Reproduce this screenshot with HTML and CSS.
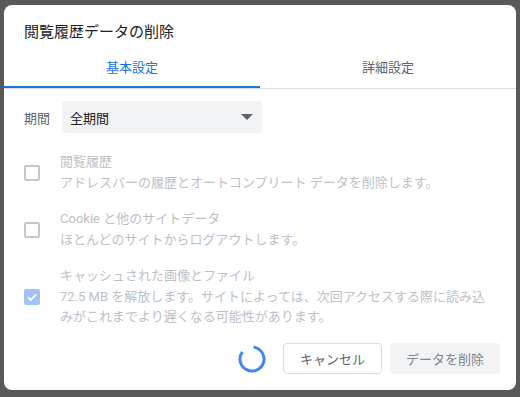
FILE: index.html
```html
<!DOCTYPE html>
<html lang="ja">
<head>
    <meta charset="UTF-8">
    <title>閲覧履歴データの削除</title>
    <link rel="stylesheet" href="styles.css">
</head>
<body>

<div class="dialog">
    <h1 class="dialog-title">閲覧履歴データの削除</h1>

    <!-- Tabs -->
    <div class="tabs">
        <div class="tab active">基本設定</div>
        <div class="tab">詳細設定</div>
    </div>

    <div class="range-row">
        <span class="range-label">期間</span>
        <div class="select">
            <span>全期間</span>
            <span class="arrow"></span>
        </div>
    </div>

    <div class="option">
        <span class="checkbox"></span>
        <div class="option-text">
            <div class="option-label">閲覧履歴</div>
            <div class="option-desc">アドレスバーの履歴とオートコンプリート データを削除します。</div>
        </div>
    </div>

    <div class="option">
        <span class="checkbox"></span>
        <div class="option-text">
            <div class="option-label">Cookie と他のサイトデータ</div>
            <div class="option-desc">ほとんどのサイトからログアウトします。</div>
        </div>
    </div>

    <div class="option">
        <span class="checkbox checked">
            <svg width="12" height="12" viewBox="0 0 12 12"><path d="M2 6.2 L4.8 9 L10.2 3.4" fill="none" stroke="#fff" stroke-width="1.8"/></svg>
        </span>
        <div class="option-text">
            <div class="option-label">キャッシュされた画像とファイル</div>
            <div class="option-desc">72.5 MB を解放します。サイトによっては、次回アクセスする際に読み込みがこれまでより遅くなる可能性があります。</div>
        </div>
    </div>

    <!-- Buttons -->
    <div class="footer">
        <svg class="spinner" width="28" height="28" viewBox="0 0 28 28">
            <path d="M15.5 2.1 A12 12 0 1 1 4.4 6.8" fill="none" stroke="#4285f4" stroke-width="3"/>
        </svg>
        <button class="btn btn-cancel">キャンセル</button>
        <button class="btn btn-delete">データを削除</button>
    </div>
</div>

</body>
</html>
```

FILE: styles.css
```css
body {
    font-family: Roboto, "Noto Sans CJK JP", sans-serif;
    background-color: #595959;
    margin: 0;
    padding: 5px 4px;
}
.dialog {
    width: 512px;
    height: 385px;
    background-color: #fff;
    border-radius: 8px;
    display: flex;
    flex-direction: column;
    box-sizing: border-box;
}
.dialog-title {
    margin: 0;
    padding: 17px 20px 0;
    font-size: 15px;
    line-height: 20px;
    font-weight: normal;
    color: #202124;
}
.tabs {
    display: flex;
    border-bottom: 1px solid #dadce0;
}
.tab {
    flex: 1;
    text-align: center;
    font-size: 13px;
    line-height: 20px;
    padding: 16px 0 8px;
    color: #5f6368;
    border-bottom: 2px solid transparent;
}
.tab.active {
    color: #1a73e8;
    border-bottom-color: #1a73e8;
}
.range-row {
    display: flex;
    align-items: center;
    gap: 12px;
    margin: 12px 20px 0;
    font-size: 13px;
}
.range-label {
    color: #5f6368;
}
.select {
    width: 200px;
    height: 32px;
    box-sizing: border-box;
    padding: 0 9px 0 8px;
    background-color: #f1f3f4;
    border-radius: 4px;
    display: flex;
    align-items: center;
    justify-content: space-between;
    color: #202124;
}
.arrow {
    width: 0;
    height: 0;
    border-left: 6px solid transparent;
    border-right: 6px solid transparent;
    border-top: 6px solid #5f6368;
}
.option {
    display: flex;
    align-items: center;
    gap: 20px;
    margin: 19px 20px 0;
    font-size: 13px;
    line-height: 20px;
    color: #bdc1c6;
}
.option + .option {
    margin-top: 16px;
}
.option-label {
    margin-bottom: 1px;
}
.option-text {
    flex: 1;
}
.checkbox {
    width: 16px;
    height: 16px;
    box-sizing: border-box;
    border: 2px solid #c6c6c6;
    border-radius: 2px;
    flex-shrink: 0;
    display: flex;
    align-items: center;
    justify-content: center;
}
.checkbox.checked {
    border: none;
    background-color: #a3c3f8;
}
.footer {
    margin-top: auto;
    padding: 0 16px 16px;
    display: flex;
    justify-content: flex-end;
    align-items: center;
    gap: 8px;
}
.spinner {
    margin-right: 9px;
}
.btn {
    font-family: Roboto, "Noto Sans CJK JP", sans-serif;
    font-size: 13px;
    height: 31px;
    border-radius: 4px;
    padding: 0;
}
.btn-cancel {
    width: 99px;
    background-color: #fff;
    border: 1px solid #dadce0;
    color: #5f6368;
}
.btn-delete {
    width: 110px;
    background-color: #f1f3f4;
    border: none;
    color: #80868b;
}
```
